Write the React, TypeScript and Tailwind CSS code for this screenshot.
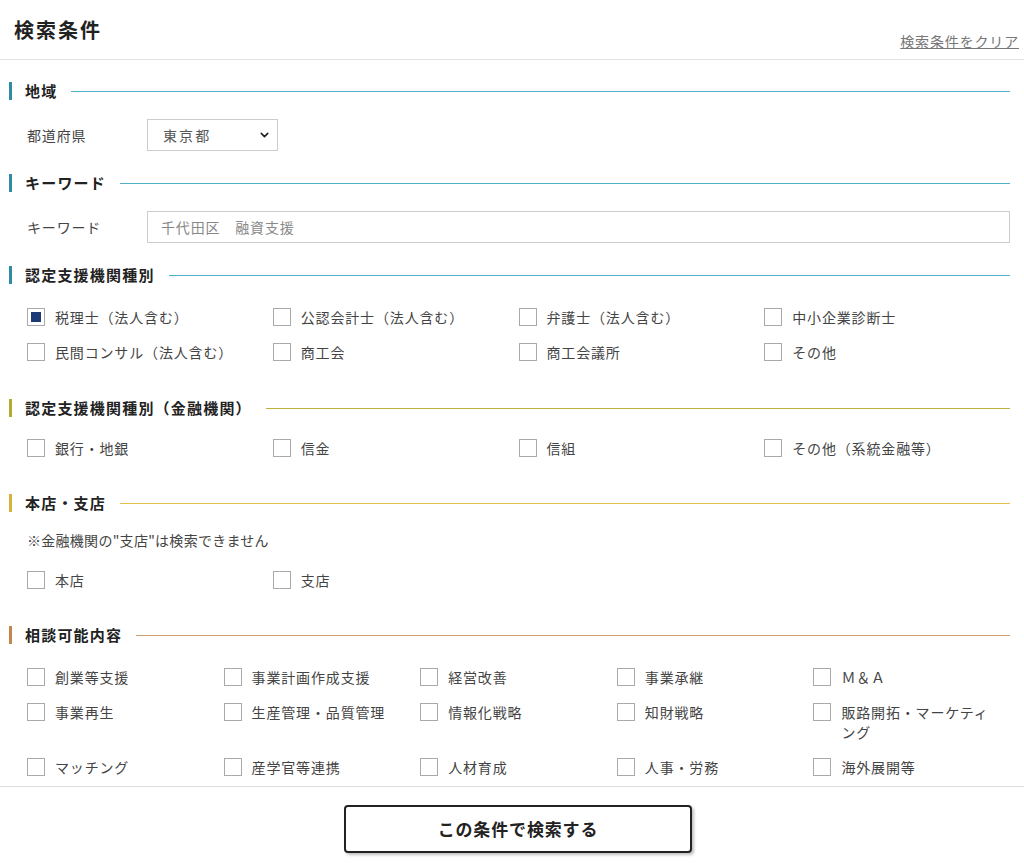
import { ChevronDown } from 'lucide-react'

const FONT = { fontFamily: '"Noto Sans CJK JP", "Noto Sans", sans-serif' }

const supportTypes = [
  { label: '税理士（法人含む）', checked: true },
  { label: '公認会計士（法人含む）' },
  { label: '弁護士（法人含む）' },
  { label: '中小企業診断士' },
  { label: '民間コンサル（法人含む）' },
  { label: '商工会' },
  { label: '商工会議所' },
  { label: 'その他' },
]

const financeTypes = ['銀行・地銀', '信金', '信組', 'その他（系統金融等）']

const consultItems = [
  '創業等支援',
  '事業計画作成支援',
  '経営改善',
  '事業承継',
  'Ｍ＆Ａ',
  '事業再生',
  '生産管理・品質管理',
  '情報化戦略',
  '知財戦略',
  '販路開拓・マーケティング',
  'マッチング',
  '産学官等連携',
  '人材育成',
  '人事・労務',
  '海外展開等',
]

function SectionHeading({ title, bar, line }: { title: string; bar: string; line: string }) {
  return (
    <div className="flex items-center h-[22px]">
      <span className={`w-[3px] h-[18px] ${bar}`} />
      <span className="ml-[13px] text-[15px] leading-[22px] font-bold tracking-[0.08em] text-[#222] whitespace-nowrap">{title}</span>
      <span className={`ml-[14px] flex-1 self-start mt-[11px] h-px ${line}`} />
    </div>
  )
}

function Check({ label, checked }: { label: string; checked?: boolean }) {
  return (
    <label className="flex items-start pr-[12px]">
      <span className="mt-[1px] w-[18px] h-[18px] shrink-0 border border-[#aaa] bg-white flex items-center justify-center">
        {checked && <span className="w-[10px] h-[10px] bg-[#1d3a78]" />}
      </span>
      <span className="ml-[10px] text-[14px] leading-[20px] tracking-[0.06em] text-[#444]">{label}</span>
    </label>
  )
}

export default function App() {
  return (
    <div className="h-[863px] w-full bg-white flex flex-col overflow-hidden text-[#333]" style={FONT}>
      <header className="h-[60px] shrink-0 border-b border-[#e2e2e2] flex justify-between pl-[14px] pr-[5px]">
        <h1 className="pt-[16px] text-[20px] leading-[28px] font-bold tracking-[0.1em] text-[#222]">検索条件</h1>
        <a className="self-end mb-[8px] text-[14px] leading-[20px] text-[#777] underline tracking-[0.06em]">検索条件をクリア</a>
      </header>

      <main className="flex-1 overflow-hidden pl-[9px] pr-[14px]">
        <section className="mt-[20px]">
          <SectionHeading title="地域" bar="bg-[#2f8aa3]" line="bg-[#4fb0c8]" />
          <div className="mt-[17px] pl-[18px] flex items-center">
            <span className="w-[120px] text-[14px] tracking-[0.06em] text-[#444]">都道府県</span>
            <div className="relative w-[131px] h-[32px]">
              <select className="w-full h-full appearance-none border border-[#ccc] bg-white pl-[15px] text-[14px] tracking-[0.15em] text-[#555] outline-none" style={FONT} defaultValue="東京都">
                <option>東京都</option>
              </select>
              <ChevronDown className="absolute right-[7px] top-1/2 -translate-y-1/2 w-[13px] h-[13px] text-[#222] pointer-events-none" strokeWidth={3} />
            </div>
          </div>
        </section>

        <section className="mt-[21px]">
          <SectionHeading title="キーワード" bar="bg-[#2f8aa3]" line="bg-[#4fb0c8]" />
          <div className="mt-[17px] pl-[18px] flex items-center">
            <span className="w-[120px] text-[14px] tracking-[0.06em] text-[#444]">キーワード</span>
            <input
              className="flex-1 h-[32px] border border-[#ccc] px-[13px] text-[14px] tracking-[0.06em] outline-none placeholder:text-[#888]"
              style={FONT}
              placeholder="千代田区　融資支援"
            />
          </div>
        </section>

        <section className="mt-[21px]">
          <SectionHeading title="認定支援機関種別" bar="bg-[#2f8aa3]" line="bg-[#4fb0c8]" />
          <div className="mt-[21px] pl-[18px] grid grid-cols-4 gap-y-[15px]">
            {supportTypes.map((s) => (
              <Check key={s.label} label={s.label} checked={s.checked} />
            ))}
          </div>
        </section>

        <section className="mt-[35px]">
          <SectionHeading title="認定支援機関種別（金融機関）" bar="bg-[#b3aa2e]" line="bg-[#bfb23c]" />
          <div className="mt-[19px] pl-[18px] grid grid-cols-4 gap-y-[15px]">
            {financeTypes.map((f) => (
              <Check key={f} label={f} />
            ))}
          </div>
        </section>

        <section className="mt-[34px]">
          <SectionHeading title="本店・支店" bar="bg-[#d8b237]" line="bg-[#e6c14a]" />
          <p className="mt-[16px] pl-[18px] text-[14px] leading-[20px] tracking-[0.02em] text-[#444]">※金融機関の"支店"は検索できません</p>
          <div className="mt-[20px] pl-[18px] grid grid-cols-4 gap-y-[15px]">
            <Check label="本店" />
            <Check label="支店" />
          </div>
        </section>

        <section className="mt-[34px]">
          <SectionHeading title="相談可能内容" bar="bg-[#c3864d]" line="bg-[#d0a070]" />
          <div className="mt-[21px] pl-[18px] grid grid-cols-5 gap-y-[15px]">
            {consultItems.map((c) => (
              <Check key={c} label={c} />
            ))}
          </div>
        </section>
      </main>

      <footer className="h-[77px] shrink-0 border-t border-[#ddd] bg-white flex justify-center pt-[18px]">
        <button className="ml-[12px] w-[348px] h-[48px] border-2 border-[#222] rounded-[4px] bg-white shadow-[2px_2px_3px_rgba(0,0,0,0.25)] text-[17px] font-bold tracking-[0.05em] text-[#222]" style={FONT}>
          この条件で検索する
        </button>
      </footer>
    </div>
  )
}
